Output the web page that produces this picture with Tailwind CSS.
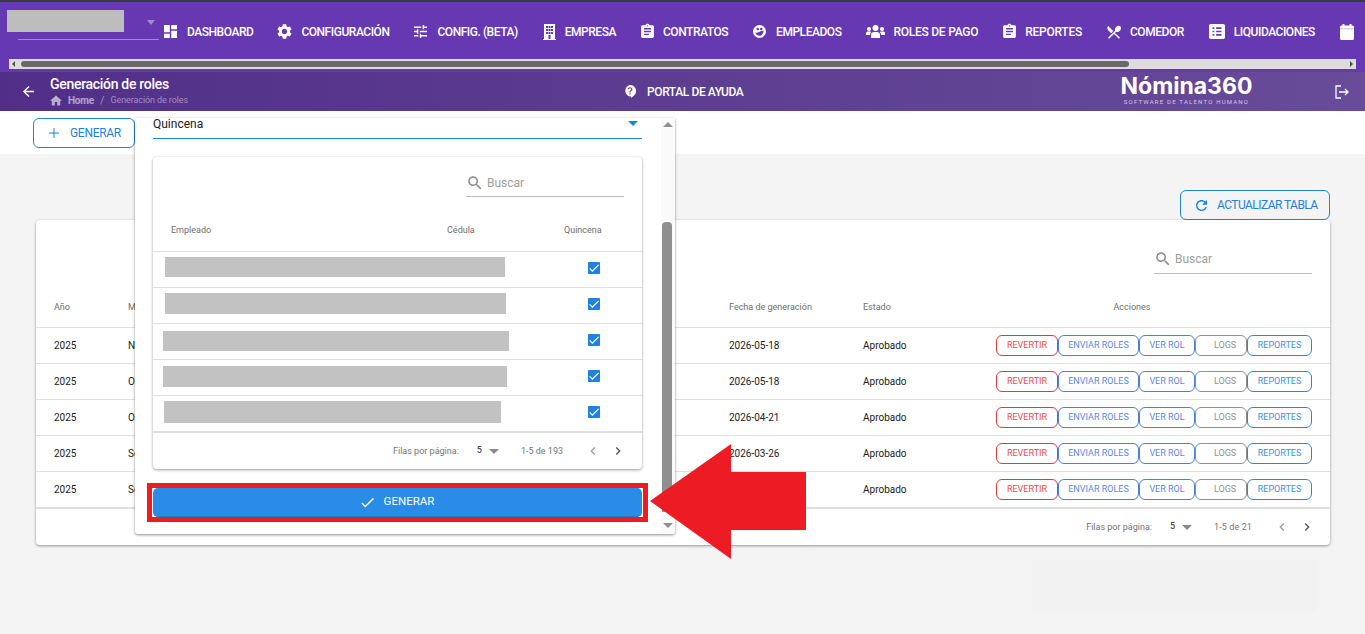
<!DOCTYPE html>
<html lang="es">
<head>
  <meta charset="UTF-8" />
  <title>Generación de roles</title>
  <script src="https://cdn.jsdelivr.net/npm/@tailwindcss/browser@4"></script>
</head>
<body class="relative h-[634px] w-[1365px] overflow-hidden bg-[#f4f4f4] font-['Roboto',sans-serif] text-[#212121]">
  <svg class="hidden">
    <symbol id="i-assign" viewBox="0 0 24 24"><path d="M19 3h-4.18C14.4 1.84 13.3 1 12 1c-1.3 0-2.4.84-2.82 2H5c-1.1 0-2 .9-2 2v14c0 1.1.9 2 2 2h14c1.1 0 2-.9 2-2V5c0-1.1-.9-2-2-2zm-7 0c.55 0 1 .45 1 1s-.45 1-1 1-1-.45-1-1 .45-1 1-1zm2 14H7v-2h7v2zm3-4H7v-2h10v2zm0-4H7V7h10v2z"/></symbol>
    <symbol id="i-search" viewBox="0 0 24 24"><path d="M15.5 14h-.79l-.28-.27C15.41 12.59 16 11.11 16 9.5 16 5.91 13.09 3 9.5 3S3 5.91 3 9.5 5.91 16 9.5 16c1.61 0 3.09-.59 4.23-1.57l.27.28v.79l5 4.99L20.49 19l-4.99-5zm-6 0C7.01 14 5 11.99 5 9.5S7.01 5 9.5 5 14 7.01 14 9.5 11.99 14 9.5 14z"/></symbol>
    <symbol id="i-left" viewBox="0 0 24 24"><path d="M15.41 7.41L14 6l-6 6 6 6 1.41-1.41L10.83 12z"/></symbol>
    <symbol id="i-right" viewBox="0 0 24 24"><path d="M8.59 16.59L10 18l6-6-6-6-1.41 1.41L13.17 12z"/></symbol>
  </svg>

  <div class="h-[2px] bg-[#3b3b3b]"></div>

  <!-- top nav -->
  <nav class="h-[70px] bg-[#6639b3] text-white">
    <div class="flex h-[57px] overflow-hidden">
      <div class="w-[164px] shrink-0 pt-2 pl-[7px]">
        <div class="h-[22px] w-[117px] bg-[#bdbdbd]"></div>
        <div class="relative mt-[7px] ml-[11px] h-px w-[141px] bg-white/40">
          <div class="absolute -top-[19px] right-[4px] h-0 w-0 border-x-[4.5px] border-t-[5px] border-x-transparent border-t-white/40"></div>
        </div>
      </div>
      <div class="flex h-[59px] items-center gap-[25px] text-[12px] font-medium tracking-[-0.46px] whitespace-nowrap">
        <a class="flex items-center gap-[10px]"><svg class="w-[13px] h-[13px] fill-white" viewBox="3 3 18 18"><path d="M3 13h8V3H3v10zm0 8h8v-6H3v6zm10 0h8V11h-8v10zm0-18v6h8V3h-8z"/></svg>DASHBOARD</a>
        <a class="flex items-center gap-[10px]"><svg class="w-[15px] h-[15px] -mx-[1px] fill-white" viewBox="2 2 20 20"><path d="M19.14 12.94c.04-.3.06-.61.06-.94 0-.32-.02-.64-.07-.94l2.03-1.58c.18-.14.23-.41.12-.61l-1.92-3.32c-.12-.22-.37-.29-.59-.22l-2.39.96c-.5-.38-1.03-.7-1.62-.94l-.36-2.54c-.04-.24-.24-.41-.48-.41h-3.84c-.24 0-.43.17-.47.41l-.36 2.54c-.59.24-1.13.57-1.62.94l-2.39-.96c-.22-.08-.47 0-.59.22L2.74 8.87c-.12.21-.08.47.12.61l2.03 1.58c-.05.3-.09.63-.09.94s.02.64.07.94l-2.03 1.58c-.18.14-.23.41-.12.61l1.92 3.32c.12.22.37.29.59.22l2.39-.96c.5.38 1.03.7 1.62.94l.36 2.54c.05.24.24.41.48.41h3.84c.24 0 .44-.17.47-.41l.36-2.54c.59-.24 1.13-.56 1.62-.94l2.39.96c.22.08.47 0 .59-.22l1.92-3.32c.12-.22.07-.47-.12-.61l-2.01-1.58zM12 15.6c-1.98 0-3.6-1.62-3.6-3.6s1.62-3.6 3.6-3.6 3.6 1.62 3.6 3.6-1.62 3.6-3.6 3.6z"/></svg>CONFIGURACIÓN</a>
        <a class="flex items-center gap-[10px]"><svg class="w-[13px] h-[13px] fill-white" viewBox="3 3 18 18"><path d="M3 17v2h6v-2H3zM3 5v2h10V5H3zm10 16v-2h8v-2h-8v-2h-2v6h2zM7 9v2H3v2h4v2h2V9H7zm14 4v-2H11v2h10zm-6-4h2V7h4V5h-4V3h-2v6z"/></svg>CONFIG. (BETA)</a>
        <a class="flex items-center gap-[9px]"><svg class="w-[13px] h-[16px] fill-white" viewBox="0 0 13 16"><path fill-rule="evenodd" d="M1 0h11v15h1v1H0v-1h1zM3 2v2h2V2zm2.5 0v2h2V2zM8 2v2h2V2zM3 5v2h2V5zm2.5 0v2h2V5zM8 5v2h2V5zM3 8v2h2V8zm2.5 0v2h2V8zM8 8v2h2V8zm-2.5 3v4h2v-4z"/></svg>EMPRESA</a>
        <a class="flex items-center gap-[9px]"><svg class="w-[17px] h-[17px] -mx-[2px] fill-white"><use href="#i-assign"/></svg>CONTRATOS</a>
        <a class="flex items-center gap-[10px]"><svg class="w-[13px] h-[13px] fill-white" viewBox="0 0 24 24"><path fill-rule="evenodd" d="M12 0a12 12 0 100 24 12 12 0 000-24zM6.500 7.500a2.300 2.300 0 014.600 0 2.300 2.300 0 01-4.600 0zm6.400 0a2.300 2.300 0 014.600 0 2.300 2.300 0 01-4.600 0zM4.500 14c2.500.5 5 0 7.500-1.500s5-2 7.500-1.500c-.3 4.500-3.500 9-7.500 9s-7.200-2.500-7.500-6z"/></svg>EMPLEADOS</a>
        <a class="flex items-center gap-[8px] tracking-[-0.25px]"><svg class="w-[19px] h-[13px] fill-white" viewBox="0 0 38 26"><circle cx="19" cy="6" r="6"/><circle cx="6" cy="8" r="4"/><circle cx="32" cy="8" r="4"/><path d="M10 26v-6c0-4 3-6 6-6h6c3 0 6 2 6 6v6zM0 20v-3c0-3 2-4 4-4h4c1 0 2 .4 3 1-2 1.500-3 3.500-3 6zM38 20v-3c0-3-2-4-4-4h-4c-1 0-2 .4-3 1 2 1.500 3 3.500 3 6z"/></svg>ROLES DE PAGO</a>
        <a class="flex items-center gap-[9px] tracking-[-0.25px]"><svg class="w-[17px] h-[17px] -mx-[2px] fill-white"><use href="#i-assign"/></svg>REPORTES</a>
        <a class="flex items-center gap-[9px]"><svg class="w-[14px] h-[14px] fill-white" viewBox="3 2 18 19.500"><path d="M8.100 13.340l2.830-2.830L3.910 3.500c-1.560 1.560-1.560 4.090 0 5.660l4.190 4.180zm6.780-1.810c1.530.71 3.680.21 5.270-1.380 1.910-1.910 2.280-4.650.81-6.120-1.460-1.460-4.200-1.100-6.120.81-1.590 1.590-2.090 3.740-1.380 5.270L3.700 19.870l1.410 1.410L12 14.410l6.880 6.880 1.410-1.410L13.410 13l1.470-1.470z"/></svg>COMEDOR</a>
        <a class="flex items-center gap-[9px]"><svg class="w-[16px] h-[15px] fill-white" viewBox="3 3 18 18" preserveAspectRatio="none"><path d="M19 3H5c-1.100 0-2 .9-2 2v14c0 1.100.9 2 2 2h14c1.100 0 2-.9 2-2V5c0-1.100-.9-2-2-2zM7 7h2v2H7V7zm0 4h2v2H7v-2zm0 4h2v2H7v-2zm10 2h-6v-2h6v2zm0-4h-6v-2h6v2zm0-4h-6V7h6v2z"/></svg>LIQUIDACIONES</a>
        <a class="flex items-center"><svg class="w-[14px] h-[16px]" viewBox="0 0 14 16"><rect y="1.500" width="14" height="14.500" rx="1.500" fill="#fff"/><rect x="2.500" width="2" height="3" fill="#fff"/><rect x="9.500" width="2" height="3" fill="#fff"/><rect y="4" width="14" height="1.500" fill="#d9cdee"/></svg></a>
      </div>
    </div>
    <!-- horizontal scrollbar of the menu -->
    <div class="relative mx-[9px] h-[10px] bg-[#dcdcdc]">
      <div class="absolute top-[2px] left-[3px] h-0 w-0 border-y-[3px] border-r-[3px] border-y-transparent border-r-[#505050]"></div>
      <div class="absolute top-[2px] left-[12px] h-[6px] w-[1108px] rounded-full bg-[#696969]"></div>
      <div class="absolute top-[2px] right-[3px] h-0 w-0 border-y-[3px] border-l-[3px] border-y-transparent border-l-[#505050]"></div>
    </div>
  </nav>

  <!-- page header -->
  <header class="flex h-[39px] items-center bg-gradient-to-r from-[#512f88] to-[#684b99] text-white">
    <svg class="ml-[23px] h-[11px] w-[11px] fill-white" viewBox="4 4 16 16"><path d="M20 11H7.830l5.590-5.590L12 4l-8 8 8 8 1.410-1.410L7.830 13H20v-2z"/></svg>
    <div class="ml-[16px] w-[574px]">
      <div class="-mt-[2px] text-[14px] leading-[18px] font-medium tracking-[-0.3px]">Generación de roles</div>
      <div class="mt-[1px] flex items-center text-[9px] leading-[13px] text-white/45">
        <svg class="h-[11px] w-[12px] fill-white/60" viewBox="2 3 20 17"><path d="M10 20v-6h4v6h5v-8h3L12 3 2 12h3v8z"/></svg>
        <span class="ml-[6px] text-[10px] font-bold tracking-[-0.2px] text-white/55">Home</span><span class="mx-[6px] text-[11px]">/</span><span class="tracking-[-0.1px]">Generación de roles</span>
      </div>
    </div>
    <svg class="h-[13px] w-[12px]" viewBox="0 0 12 13"><path d="M6 0a6 6 0 014 10.500L7 13v-1.500A5.800 5.800 0 016 0z" fill="#fff"/><path d="M5.400 7.500h1.200c0-1.500 1.800-1.700 1.800-3.200C8.400 3 7.300 2.200 6 2.200S3.700 3 3.600 4.300h1.200c.1-.6.600-1 1.200-1s1.200.4 1.200 1c0 1-2 1.300-1.800 3.200zM5.400 8.300h1.200v1.200H5.400z" fill="#5b3a8e"/></svg>
    <span class="ml-[11px] w-[473px] text-[12px] font-medium tracking-[-0.4px]">PORTAL DE AYUDA</span>
    <div class="-mt-[4px] w-[133px] text-center">
      <div class="font-['Inter',sans-serif] text-[23px] leading-[23px] font-bold whitespace-nowrap">Nómina360</div>
      <div class="text-[6px] leading-[7px] tracking-[1.2px] whitespace-nowrap text-white/70">SOFTWARE DE TALENTO HUMANO</div>
    </div>
    <svg class="ml-[82px] h-[14px] w-[14px] fill-none stroke-white stroke-[1.300]" viewBox="0 0 14 14"><path d="M6 1H1v12h5M4 7h9M10 4l3 3-3 3"/></svg>
  </header>

  <!-- action bar -->
  <div class="flex h-[43px] items-center bg-white pt-[1px] pl-[33px]">
    <button class="flex h-[30px] w-[102px] items-center rounded-[6px] border border-[#1d82e0] pb-[1px] pl-[15px] text-[12px] tracking-[-0.3px] text-[#1d82e0]">
      <svg class="h-[10px] w-[10px] fill-[#1d82e0]" viewBox="5 5 14 14"><path d="M19 12.700h-6.300V19h-1.400v-6.300H5v-1.400h6.300V5h1.400v6.300H19z"/></svg>
      <span class="ml-[11px]">GENERAR</span>
    </button>
  </div>

  <!-- main content -->
  <main class="px-[35px]">
    <div class="flex justify-end pt-[36px]">
      <button class="flex h-[30px] w-[150px] items-center rounded-[6px] border border-[#1d82e0] pl-[15px] text-[12px] tracking-[-0.55px] text-[#1d82e0]">
        <svg class="h-[11px] w-[11px] fill-[#1d82e0]" viewBox="4 4 16 16"><path d="M17.650 6.350C16.200 4.900 14.210 4 12 4c-4.420 0-7.990 3.580-7.990 8s3.570 8 7.990 8c3.730 0 6.840-2.550 7.730-6h-2.080c-.82 2.330-3.040 4-5.650 4-3.310 0-6-2.690-6-6s2.690-6 6-6c1.660 0 3.140.69 4.220 1.780L13 11h7V4l-2.350 2.350z"/></svg>
        <span class="ml-[10px]">ACTUALIZAR TABLA</span>
      </button>
    </div>
    <section class="ml-[1px] h-[325px] w-[1294px] rounded-[4px] bg-white shadow-[0_1px_3px_rgba(0,0,0,0.4)]">
      <div class="flex h-[54px] justify-end pr-[18px]">
        <div class="mt-[27px] flex h-[27px] w-[158px] items-center border-b border-[#bdbdbd] pb-[3px] text-[12px] text-[#9e9e9e]">
          <svg class="h-[18px] w-[18px] fill-[#8a8a8a]"><use href="#i-search"/></svg><span class="ml-[3px]">Buscar</span>
        </div>
      </div>
      <div class="flex h-[54px] items-center border-b border-[#e0e0e0] pt-[15px] text-[9px] text-[#6e6e6e]">
        <div class="w-[92px] pl-[18px]">Año</div>
        <div class="w-[601px]">Mes</div>
        <div class="w-[134px]">Fecha de generación</div>
        <div class="w-[89px]">Estado</div>
        <div class="w-[360px] text-center">Acciones</div>
      </div>
      <div id="roles"></div>
      <div class="flex h-[37px] items-center justify-end border-t border-[#e0e0e0] pr-[15px] text-[9px] text-[#757575]">
        <span class="pt-[2px]">Filas por página:</span>
        <span class="ml-[18px] text-[#212121]">5</span>
        <span class="ml-[7px] h-0 w-0 border-x-[5px] border-t-[5px] border-x-transparent border-t-[#8a8a8a]"></span>
        <span class="ml-[22px] pt-[2px] tracking-[0.1px]">1-5 de 21</span>
        <svg class="ml-[22px] h-[16px] w-[16px] fill-[#9e9e9e]"><use href="#i-left"/></svg>
        <svg class="ml-[9px] h-[16px] w-[16px] fill-[#555]"><use href="#i-right"/></svg>
      </div>
    </section>
    <div class="mt-[15px] ml-[997px] h-[52px] w-[284px] bg-[#f2f2f2]"></div>
  </main>

  <!-- modal, scrolled down a bit -->
  <div class="absolute top-[118px] left-[135px] flex h-[416px] w-[540px] overflow-hidden rounded-b-[3px] bg-white shadow-[0_1px_3px_rgba(0,0,0,0.45)]">
    <div class="w-[526px]">
      <div class="relative ml-[18px] h-[21px] w-[489px] border-b border-[#1d82e0] text-[12px] leading-[13px]">Quincena
        <span class="absolute top-[3px] right-[4px] h-0 w-0 border-x-[5px] border-t-[5px] border-x-transparent border-t-[#1d82e0]"></span>
      </div>
      <div class="mt-[18px] ml-[18px] h-[312px] w-[489px] rounded-[4px] bg-white shadow-[0_1px_3px_rgba(0,0,0,0.4)]">
        <div class="flex h-[39px] justify-end pr-[18px]">
          <div class="mt-[12px] flex h-[28px] w-[158px] items-center border-b border-[#bdbdbd] text-[12px] text-[#9e9e9e]">
            <svg class="h-[18px] w-[18px] fill-[#8a8a8a]"><use href="#i-search"/></svg><span class="ml-[3px]">Buscar</span>
          </div>
        </div>
        <div class="flex h-[56px] items-center border-b border-[#e0e0e0] pt-[14px] text-[9px] text-[#6e6e6e]">
          <div class="w-[294px] pl-[18px]">Empleado</div>
          <div class="w-[117px]">Cédula</div>
          <div>Quincena</div>
        </div>
        <div id="empleados"></div>
        <div class="flex h-[37px] items-center justify-end border-t border-[#e0e0e0] pr-[16px] text-[9px] text-[#757575]">
          <span class="pt-[2px]">Filas por página:</span>
          <span class="ml-[18px] text-[#212121]">5</span>
          <span class="ml-[7px] h-0 w-0 border-x-[5px] border-t-[5px] border-x-transparent border-t-[#8a8a8a]"></span>
          <span class="ml-[22px] pt-[2px]">1-5 de 193</span>
          <svg class="ml-[22px] h-[16px] w-[16px] fill-[#9e9e9e]"><use href="#i-left"/></svg>
          <svg class="ml-[9px] h-[16px] w-[16px] fill-[#555]"><use href="#i-right"/></svg>
        </div>
      </div>
      <div class="mt-[14px] ml-[12px] h-[39px] w-[501px] border-[5px] border-[#ed1c24] bg-white px-px">
        <button class="flex h-[29px] w-full items-center justify-center rounded-[5px] border-b border-[#1a7ad6] bg-[#2a8ce6] text-[11.500px] text-white">
          <svg class="h-[13px] w-[13px] fill-white" viewBox="3 3 18 18"><path d="M9 16.170L4.830 12l-1.420 1.410L9 19 21 7l-1.410-1.410z"/></svg>
          <span class="ml-[10px]">GENERAR</span>
        </button>
      </div>
    </div>
    <!-- modal scrollbar -->
    <div class="relative w-[14px] bg-[#fafafa]">
      <div class="absolute top-[4px] left-[2px] h-0 w-0 border-x-[5px] border-b-[5px] border-x-transparent border-b-[#8f8f8f]"></div>
      <div class="absolute top-[104px] left-[1px] h-[290px] w-[10px] rounded-t-[4px] bg-[#8f8f8f]"></div>
      <div class="absolute bottom-[6px] left-[2px] h-0 w-0 border-x-[5px] border-t-[5px] border-x-transparent border-t-[#8f8f8f]"></div>
    </div>
  </div>

  <!-- red arrow annotation -->
  <svg class="absolute top-[444px] left-[650px]" width="157" height="115" viewBox="0 0 157 115">
    <path d="M0 57 81 0V28H156V86H81V115Z" fill="#ed1c24"/>
  </svg>

  <script>
    // table rows, the data repeats so it is generated
    const roles = [
      ["2025", "Noviembre", "2026-05-18"],
      ["2025", "Octubre", "2026-05-18"],
      ["2025", "Octubre", "2026-04-21"],
      ["2025", "Septiembre", "2026-03-26"],
      ["2025", "Septiembre", "2026-03-26"],
    ];
    const btn = "flex h-[21px] items-center justify-center rounded-[6px] border";
    document.getElementById("roles").innerHTML = roles.map(r => `
      <div class="flex h-[36px] items-center border-b border-[#e0e0e0] text-[10px]">
        <div class="w-[92px] pl-[18px]">${r[0]}</div>
        <div class="w-[601px]">${r[1]}</div>
        <div class="w-[134px]">${r[2]}</div>
        <div class="w-[133px]">Aprobado</div>
        <div class="flex text-[9px]">
          <span class="${btn} w-[62px] border-[#e03a3a] text-[#ee4b4b]">REVERTIR</span>
          <span class="${btn} w-[81px] border-[#4a7fe0] text-[#5d86e6]">ENVIAR ROLES</span>
          <span class="${btn} w-[56px] border-[#4a7fe0] text-[#5d86e6]">VER ROL</span>
          <span class="${btn} w-[52px] border-[#8f8f8f] pl-[8px] text-[#8f8f8f]">LOGS</span>
          <span class="${btn} w-[65px] border-[#2a85dc] text-[#3a90e4]">REPORTES</span>
        </div>
      </div>`).join("");

    // left inset, top inset, width and height of the hidden names
    const empleados = [[12, 5, 340, 20], [12, 5, 341, 21], [10, 7, 346, 20], [10, 6, 344, 21], [11, 5, 337, 22]];
    document.getElementById("empleados").innerHTML = empleados.map(e => `
      <div class="flex h-[36px] items-center border-b border-[#e0e0e0] pb-[3px]">
        <div class="w-[435px] self-start"><div class="bg-[#c2c2c2]" style="margin:${e[1]}px 0 0 ${e[0]}px;width:${e[2]}px;height:${e[3]}px"></div></div>
        <div class="flex h-[12px] w-[12px] items-center justify-center rounded-[1px] bg-[#1d82e0]">
          <svg class="h-[10px] w-[10px] fill-white" viewBox="3 3 18 18"><path d="M9 16.170L4.830 12l-1.420 1.410L9 19 21 7l-1.410-1.410z"/></svg>
        </div>
      </div>`).join("");
  </script>
</body>
</html>
